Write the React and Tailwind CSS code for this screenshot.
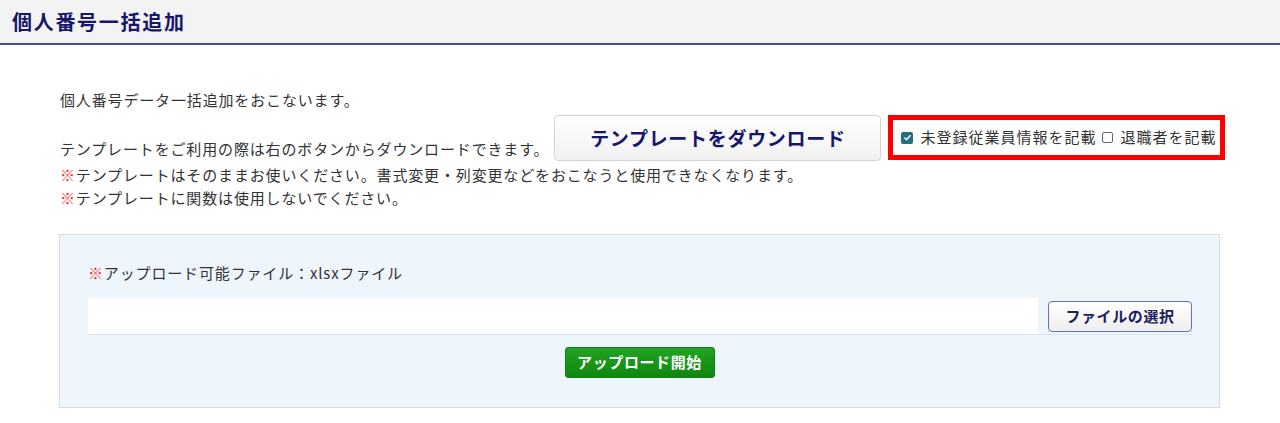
import React from 'react';

const font = { fontFamily: '"Noto Sans CJK JP", "Noto Sans", sans-serif' };

const Check = ({ checked }) =>
  checked ? (
    <span className="inline-flex w-[12px] h-[12px] rounded-[2px] bg-[#226f80] items-center justify-center mr-[7px] shrink-0">
      <svg viewBox="0 0 12 12" className="w-[9px] h-[9px]">
        <path d="M2 6.2 L4.8 9 L10 3" stroke="#fff" strokeWidth="2" fill="none" />
      </svg>
    </span>
  ) : (
    <span className="inline-block w-[11px] h-[11px] rounded-[2px] border border-[#666] bg-white mr-[7px] shrink-0" />
  );

export default function App() {
  return (
    <div className="w-[1280px] h-[423px] bg-white text-[15px] tracking-[0.85px] text-[#333]" style={font}>
      {/* タイトル */}
      <div className="h-[45px] bg-[#f3f3f3] border-b-2 border-[#4b4b8c] px-[12px] flex items-center">
        <h1 className="text-[20px] tracking-[1.7px] font-bold text-[#16166b] leading-none">個人番号一括追加</h1>
      </div>

      <div className="px-[60px] pt-[43px]">
        <p className="leading-[23px]">個人番号データ一括追加をおこないます。</p>

        <div className="flex items-end mt-[4px]">
          <p className="leading-[23px] mb-[1px] whitespace-nowrap">テンプレートをご利用の際は右のボタンからダウンロードできます。</p>
          <button className="ml-[5px] w-[327px] h-[46px] shrink-0 rounded-[4px] border border-[#d4d4d4] bg-gradient-to-b from-white to-[#f1f1f1] text-[19px] tracking-[0.7px] font-bold text-[#16166b]">
            テンプレートをダウンロード
          </button>
          <div className="ml-[7px] mb-[1px] w-[337px] h-[45px] shrink-0 border-[5px] border-[#ff0000] flex items-center pl-[8px] tracking-[1px] whitespace-nowrap">
            <Check checked />
            <span>未登録従業員情報を記載</span>
            <span className="ml-[6px]" />
            <Check />
            <span>退職者を記載</span>
          </div>
        </div>

        <p className="leading-[23px] mt-[2px] whitespace-nowrap"><span className="text-[#ff3333]">※</span>テンプレートはそのままお使いください。書式変更・列変更などをおこなうと使用できなくなります。</p>
        <p className="leading-[23px]"><span className="text-[#ff3333]">※</span>テンプレートに関数は使用しないでください。</p>

        <div className="-ml-[1px] mt-[25px] border border-[#dcdcdc] bg-[#edf5fd] pt-[26px] pb-[29px] px-[28px]">
          <p className="leading-[23px]"><span className="text-[#ff3333]">※</span>アップロード可能ファイル：xlsxファイル</p>
          <div className="flex items-center mt-[14px] w-[1104px] border-b border-[#dde3ea]">
            <div className="w-[950px] h-[36px] bg-white" />
            <button className="ml-[10px] w-[144px] h-[31px] rounded-[4px] border border-[#6273b5] bg-gradient-to-b from-white to-[#eeeeee] text-[15px] tracking-[0.6px] font-bold text-[#1d1d5c]">
              ファイルの選択
            </button>
          </div>
          <div className="flex justify-center mt-[12px]">
            <button className="w-[150px] h-[31px] rounded-[3px] border border-[#138013] bg-gradient-to-b from-[#22a322] to-[#0f870f] text-[15px] tracking-[0.6px] font-bold text-white">
              アップロード開始
            </button>
          </div>
        </div>
      </div>
    </div>
  );
}
